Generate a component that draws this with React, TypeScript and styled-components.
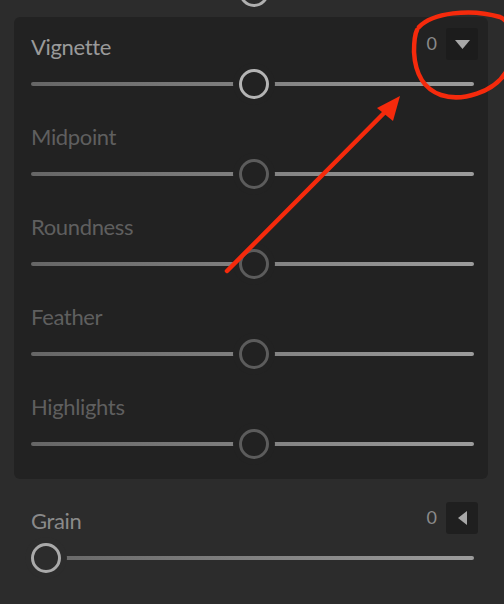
import React from "react";
import styled, { createGlobalStyle } from "styled-components";

const GlobalStyle = createGlobalStyle`
  html, body { margin: 0; padding: 0; background: #2c2c2c; }
  body { font-family: Lato, "Open Sans", sans-serif; }
`;

const OUTER = "#2c2c2c";
const PANEL = "#222222";

const Screen = styled.div`
  position: relative;
  width: 504px;
  height: 604px;
  overflow: hidden;
  background: ${OUTER};
`;

const TopStub = styled.div`
  height: 7px;
  overflow: hidden;
  display: flex;
  justify-content: center;
  align-items: flex-end;
  padding-left: 4px;
`;

const StubRing = styled.div`
  width: 30px;
  height: 30px;
  box-sizing: border-box;
  border-radius: 50%;
  border: 3.5px solid #b0b0b0;
  flex: none;
`;

const Panel = styled.section`
  margin: 10px 16px 0 14px;
  background: ${PANEL};
  border-radius: 6px;
  padding-bottom: 12px;
`;

const Row = styled.div<{ $outer?: boolean }>`
  padding: ${(p) => (p.$outer ? "23px 26px 0 31px" : "11px 10px 9px 17px")};
`;

const Header = styled.div`
  display: flex;
  align-items: center;
  justify-content: space-between;
  height: 32px;
`;

const Label = styled.span<{ $color: string }>`
  font-size: 22px;
  letter-spacing: -0.35px;
  color: ${(p) => p.$color};
  line-height: 1;
  margin-top: 5px;
`;

const ValueGroup = styled.div`
  display: flex;
  align-items: center;
  gap: 9px;
`;

const Value = styled.span`
  font-size: 18px;
  color: #8a8a8a;
  line-height: 1;
  margin-bottom: 3px;
`;

const ToggleBox = styled.button<{ $bg: string }>`
  width: 32px;
  height: 32px;
  border: none;
  padding: 0;
  border-radius: 3px;
  background: ${(p) => p.$bg};
  display: flex;
  align-items: center;
  justify-content: center;
`;

const Slider = styled.div`
  position: relative;
  height: 28px;
  margin: 10px 4px 0 0;
`;

const Track = styled.div`
  position: absolute;
  left: 0;
  right: 0;
  top: 50%;
  height: 4px;
  margin-top: -2px;
  border-radius: 2px;
  background: linear-gradient(to right, #666666, #9c9c9c);
`;

const Thumb = styled.div<{ $color: string; $bg: string }>`
  position: absolute;
  top: 50%;
  width: 30px;
  height: 30px;
  box-sizing: border-box;
  border-radius: 50%;
  border: 3.5px solid ${(p) => p.$color};
  background: ${(p) => p.$bg};
  box-shadow: 0 0 0 6px ${(p) => p.$bg};
  transform: translate(-50%, -50%);
`;

const Annotation = styled.svg`
  position: absolute;
  left: 0;
  top: 0;
  pointer-events: none;
`;

type Props = {
  label: string;
  labelColor: string;
  thumbColor: string;
  bg: string;
  value: number;
  control?: "down" | "left";
  boxBg?: string;
  outer?: boolean;
};

const DownTri = () => (
  <svg width="15" height="9" viewBox="0 0 15 9">
    <polygon points="0,0 15,0 7.5,9" fill="#a8a8a8" />
  </svg>
);

const LeftTri = () => (
  <svg width="9" height="14" viewBox="0 0 9 14">
    <polygon points="9,0 9,14 0,7" fill="#a8a8a8" />
  </svg>
);

const SliderRow: React.FC<Props> = ({
  label,
  labelColor,
  thumbColor,
  bg,
  value,
  control,
  boxBg = "#1c1c1c",
  outer,
}) => (
  <Row $outer={outer}>
    <Header>
      <Label $color={labelColor}>{label}</Label>
      {control && (
        <ValueGroup>
          <Value>0</Value>
          <ToggleBox $bg={boxBg}>{control === "down" ? <DownTri /> : <LeftTri />}</ToggleBox>
        </ValueGroup>
      )}
    </Header>
    <Slider>
      <Track />
      <Thumb
        $color={thumbColor}
        $bg={bg}
        style={{ left: `calc(15px + (100% - 30px) * ${value})` }}
      />
    </Slider>
  </Row>
);

const disabled = ["Midpoint", "Roundness", "Feather", "Highlights"];

export default function App() {
  return (
    <>
      <GlobalStyle />
      <Screen>
        <TopStub>
          <StubRing />
        </TopStub>
        <Panel>
          <SliderRow
            label="Vignette"
            labelColor="#9a9a9a"
            thumbColor="#b4b4b4"
            bg={PANEL}
            value={0.504}
            control="down"
          />
          {disabled.map((l) => (
            <SliderRow
              key={l}
              label={l}
              labelColor="#5f5f5f"
              thumbColor="#5c5c5c"
              bg={PANEL}
              value={0.504}
            />
          ))}
        </Panel>
        <SliderRow
          outer
          label="Grain"
          labelColor="#8a8a8a"
          thumbColor="#aaaaaa"
          bg={OUTER}
          value={0}
          control="left"
          boxBg="#1f1f1f"
        />
        <Annotation width="504" height="604" viewBox="0 0 504 604">
          <g fill="none" stroke="#f52a0c" strokeWidth="4.5" strokeLinecap="round">
            <path d="M419,27 C432,13 470,8 500,17 C516,24 516,56 506,72 C494,92 462,102 441,95 C421,88 415,70 414,52 C414,41 415,34 417,30" />
            <path d="M227,271 L390,107" />
          </g>
          <polygon points="400,96 377,108 393,121" fill="#f52a0c" />
        </Annotation>
      </Screen>
    </>
  );
}
